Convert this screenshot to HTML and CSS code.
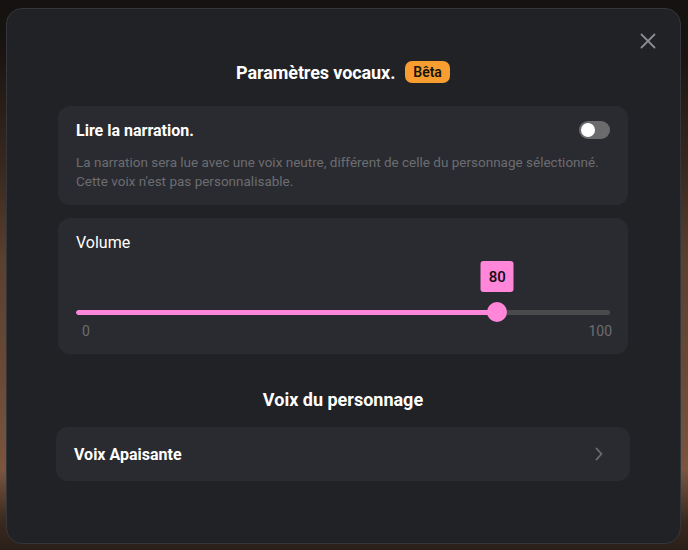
FILE: index.html
```html
<!DOCTYPE html>
<html lang="fr">
<head>
<meta charset="utf-8">
<title>Paramètres vocaux</title>
<link rel="stylesheet" href="styles.css">
</head>
<body>
<div class="backdrop">
  <div class="modal">
    <button class="close" aria-label="Fermer">
      <svg width="16" height="16" viewBox="0 0 16 16"><path d="M1.5 1.5 L14.5 14.5 M14.5 1.5 L1.5 14.5" stroke="#8b8c90" stroke-width="1.8" stroke-linecap="round" fill="none"/></svg>
    </button>
    <div class="head">
      <h1 class="title">Paramètres vocaux.</h1>
      <span class="badge">Bêta</span>
    </div>

    <section class="card narration">
      <div class="row">
        <span class="label-bold">Lire la narration.</span>
        <span class="toggle"><span class="knob"></span></span>
      </div>
      <p class="desc">La narration sera lue avec une voix neutre, différent de celle du personnage sélectionné. Cette voix n'est pas personnalisable.</p>
    </section>

    <section class="card volume">
      <div class="label">Volume</div>
      <div class="slider">
        <div class="track"><div class="fill" style="width: 80%"></div></div>
        <div class="thumb-lane"><span class="thumb" style="left: 80%"><span class="tip">80</span></span></div>
      </div>
      <div class="scale"><span>0</span><span>100</span></div>
    </section>

    <h2 class="section-title">Voix du personnage</h2>

    <section class="card voice">
      <span class="label-bold">Voix Apaisante</span>
      <svg class="chev" width="10" height="14" viewBox="0 0 10 14"><path d="M2.5 1.5 L7.5 7 L2.5 12.5" stroke="#6d6e72" stroke-width="1.8" fill="none" stroke-linecap="round" stroke-linejoin="round"/></svg>
    </section>
  </div>
</div>
</body>
</html>
```
FILE: styles.css
```css
* { box-sizing: border-box; }
html, body { margin: 0; padding: 0; }
body {
  width: 688px;
  height: 550px;
  overflow: hidden;
  font-family: Roboto, "Liberation Sans", sans-serif;
  background:
    linear-gradient(180deg, #141110 0px, #1a1512 55px, #2a1f18 110px, #3a2a20 175px, #5a4030 260px, #6a4a36 380px, #7a5540 470px, #3a2a20 520px, #2a1f18 550px);
}
.backdrop {
  padding: 8px 7px 6px 6px;
  height: 550px;
}
.modal {
  position: relative;
  height: 536px;
  background: #212226;
  border: 1px solid #34363b;
  border-radius: 16px;
  padding: 52px 52px 0 51px;
  display: flex;
  flex-direction: column;
}
.close {
  position: absolute;
  top: 24px;
  right: 24px;
  width: 16px;
  height: 16px;
  padding: 0;
  border: 0;
  background: none;
  display: flex;
}
.head {
  display: flex;
  align-items: center;
  justify-content: center;
  gap: 10px;
  height: 22px;
}
.title {
  margin: 0;
  font-size: 18px;
  font-weight: 700;
  color: #ffffff;
  letter-spacing: -0.1px;
}
.badge {
  background: #f89d2f;
  color: #17130e;
  font-size: 14px;
  font-weight: 600;
  padding: 0 8px;
  height: 22px;
  line-height: 22px;
  border-radius: 7px;
}
.card {
  background: #2a2b30;
  border-radius: 12px;
}
.narration {
  margin-top: 23px;
  padding: 14px 18px 14px 18px;
}
.row {
  display: flex;
  align-items: center;
  justify-content: space-between;
  height: 20px;
}
.label-bold {
  font-size: 16px;
  font-weight: 700;
  color: #ffffff;
}
.toggle {
  width: 31px;
  height: 18px;
  border-radius: 9px;
  background: #6b6b6d;
  display: flex;
  align-items: center;
  padding: 0 2px;
}
.knob {
  width: 14px;
  height: 14px;
  border-radius: 50%;
  background: #ffffff;
}
.desc {
  margin: 13px 0 0 0;
  font-size: 13.5px;
  line-height: 19px;
  color: #6c6d72;
}
.volume {
  margin-top: 13px;
  padding: 15px 18px 15px 18px;
}
.label {
  font-size: 16px;
  line-height: 20px;
  color: #ffffff;
}
.slider {
  position: relative;
  margin-top: 49px;
  height: 20px;
  display: flex;
  align-items: center;
}
.track {
  width: 100%;
  height: 5px;
  border-radius: 3px;
  background: #4a4a4c;
  overflow: hidden;
}
.fill {
  height: 100%;
  background: #ff86d8;
  border-radius: 3px;
}
.thumb-lane {
  position: absolute;
  left: 10px;
  right: 10px;
  top: 0;
  height: 20px;
}
.thumb {
  position: absolute;
  top: 0;
  width: 20px;
  height: 20px;
  margin-left: -10px;
  border-radius: 50%;
  background: #ff86d8;
}
.tip {
  position: absolute;
  bottom: 30px;
  left: 50%;
  transform: translateX(-50%);
  width: 33px;
  height: 31px;
  border-radius: 3px;
  background: #ff86d8;
  color: #0e0a14;
  font-size: 15px;
  font-weight: 500;
  display: flex;
  align-items: center;
  justify-content: center;
}
.scale {
  display: flex;
  justify-content: space-between;
  margin: 1px -2px 0 6px;
  font-size: 14px;
  line-height: 16px;
  color: #6c6d70;
}
.section-title {
  margin: 35px 0 0 0;
  text-align: center;
  font-size: 18px;
  line-height: 22px;
  font-weight: 700;
  color: #ffffff;
}
.voice {
  margin: 16px -2px 0 -2px;
  height: 54px;
  padding: 0 26px 0 18px;
  display: flex;
  align-items: center;
  justify-content: space-between;
}
.chev { display: block; }
```
